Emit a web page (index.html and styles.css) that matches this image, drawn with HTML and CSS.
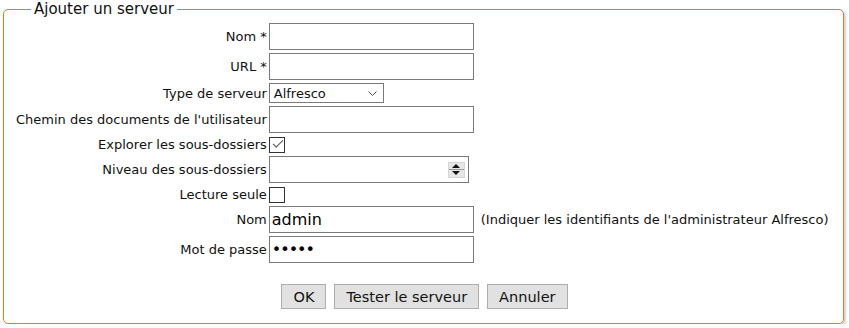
FILE: index.html
```html
<!DOCTYPE html>
<html lang="fr">

<head>
    <meta charset="UTF-8">
    <title>Ajouter un serveur</title>
    <link rel="stylesheet" href="styles.css">
</head>

<body>
    <form class="cadre">
        <fieldset>
            <legend>Ajouter un serveur</legend>
            <div class="champs">
                <label for="nom">Nom *</label>
                <input id="nom" class="texte" type="text">

                <label for="url">URL *</label>
                <input id="url" class="texte" type="text">

                <label for="type">Type de serveur</label>
                <div class="liste">
                    <select id="type">
                        <option>Alfresco</option>
                    </select>
                    <svg class="fleche" width="9" height="5" viewBox="0 0 9 5">
                        <path d="M0.5 0.5 L4.5 4.5 L8.5 0.5" fill="none" stroke="#555" stroke-width="1" />
                    </svg>
                </div>

                <label for="chemin">Chemin des documents de l'utilisateur</label>
                <input id="chemin" class="texte" type="text">

                <label for="explorer">Explorer les sous-dossiers</label>
                <input id="explorer" class="case" type="checkbox" checked>

                <label for="niveau">Niveau des sous-dossiers</label>
                <div class="nombre">
                    <input id="niveau" type="text">
                    <span class="spin">
                        <span class="haut"></span>
                        <span class="bas"></span>
                    </span>
                </div>

                <label for="lecture">Lecture seule</label>
                <input id="lecture" class="case" type="checkbox">

                <label for="login">Nom</label>
                <input id="login" class="texte grand" type="text" value="admin">
                <span class="aide">(Indiquer les identifiants de l'administrateur Alfresco)</span>

                <label for="mdp">Mot de passe</label>
                <input id="mdp" class="texte grand mdp" type="password" value="admin">
            </div>

            <div class="actions">
                <button type="button">OK</button>
                <button type="button">Tester le serveur</button>
                <button type="button">Annuler</button>
            </div>
        </fieldset>
    </form>
</body>

</html>
```

FILE: styles.css
```css
* {
    box-sizing: border-box;
}

body {
    margin: 0;
    font-family: "DejaVu Sans", Verdana, sans-serif;
    font-size: 13px;
    color: #111;
    background: #fff;
}

.cadre {
    margin: 0 5px 0 3px;
}

fieldset {
    margin: 0;
    padding: 5px 10px 14px 12px;
    border: 1px solid #f0790f;
    border-radius: 5px;
    box-shadow: 2px 2px 2px #d4d4d4;
}

legend {
    margin-left: 15px;
    padding: 0 3px;
    font-size: 15px;
    line-height: 18px;
}

/*---------- lignes du formulaire ----------*/
.champs {
    display: grid;
    grid-template-columns: max-content max-content 1fr;
    column-gap: 2px;
    row-gap: 3px;
    align-items: center;
}

.champs label {
    grid-column: 1;
    text-align: right;
    line-height: 17px;
}

.champs input,
.champs .liste,
.champs .nombre {
    grid-column: 2;
}

.aide {
    grid-column: 3;
    padding-left: 5px;
}

.texte {
    width: 205px;
    height: 27px;
    margin: 0;
    padding: 0 2px;
    border: 1px solid #7a7a7a;
    font-family: inherit;
    font-size: 13px;
}

.grand {
    font-size: 16px;
}

.mdp {
    letter-spacing: -1px;
}

.liste {
    position: relative;
    width: 115px;
    height: 20px;
}

.liste select {
    appearance: none;
    width: 100%;
    height: 100%;
    margin: 0;
    padding: 0 0 0 4px;
    border: 1px solid #7a7a7a;
    border-radius: 0;
    background: #fff;
    font-family: inherit;
    font-size: 13px;
    color: #111;
}

.fleche {
    position: absolute;
    top: 8px;
    right: 7px;
}

.case {
    appearance: none;
    width: 16px;
    height: 16px;
    margin: 0;
    border: 1px solid #333;
    background: #fff;
    position: relative;
}

.case:checked::after {
    content: "";
    position: absolute;
    left: 3px;
    top: 2px;
    width: 9px;
    height: 4px;
    border-left: 1px solid #555;
    border-bottom: 1px solid #555;
    transform: rotate(-45deg);
}

.nombre {
    display: flex;
    align-items: center;
    width: 200px;
    height: 27px;
    border: 1px solid #7a7a7a;
    padding-right: 3px;
}

.nombre input {
    flex: 1;
    min-width: 0;
    border: none;
    outline: none;
    height: 100%;
    font-family: inherit;
    font-size: 13px;
}

.spin {
    display: flex;
    flex-direction: column;
    width: 17px;
    height: 16px;
    background: #e6e6e6;
    border: 1px solid #d6d6d6;
}

.spin span {
    flex: 1;
    display: flex;
    align-items: center;
    justify-content: center;
}

.spin .haut {
    border-bottom: 1px solid #9a9a9a;
}

.spin .haut::after {
    content: "";
    border-left: 4px solid transparent;
    border-right: 4px solid transparent;
    border-bottom: 4px solid #111;
}

.spin .bas::after {
    content: "";
    border-left: 4px solid transparent;
    border-right: 4px solid transparent;
    border-top: 4px solid #111;
}

/*---------- boutons ----------*/
.actions {
    display: flex;
    justify-content: center;
    gap: 8px;
    margin-top: 21px;
}

button {
    height: 25px;
    padding: 0 11px;
    border: 1px solid #adadad;
    border-radius: 0;
    background: #e1e1e1;
    font-family: inherit;
    font-size: 14.5px;
    color: #111;
}
```
